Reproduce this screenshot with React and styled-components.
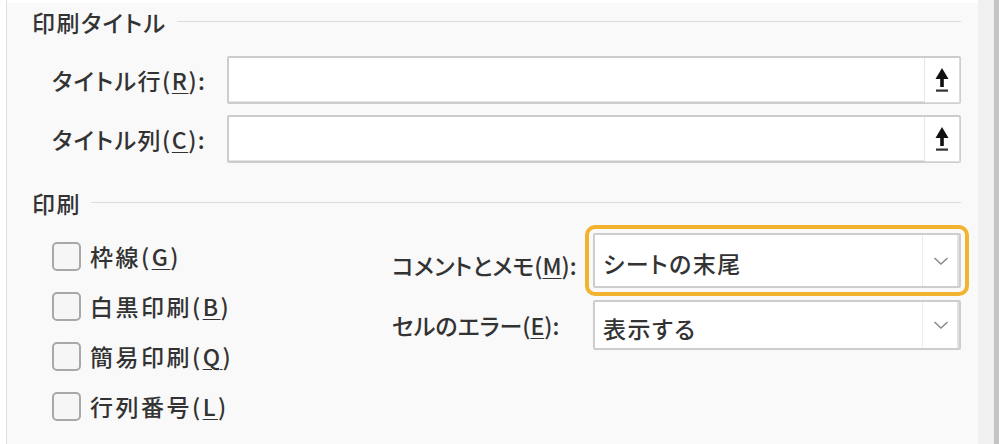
import React from "react";
import styled, { createGlobalStyle } from "styled-components";

const GlobalStyle = createGlobalStyle`
  html, body {
    margin: 0;
    padding: 0;
    background: #ffffff;
  }
  body {
    font-family: "Noto Sans CJK JP", "Noto Sans", sans-serif;
    color: #333333;
  }
`;

const Page = styled.div`
  display: flex;
  width: 1000px;
  height: 444px;
  overflow: hidden;
  background: #ffffff;
`;

const LeftEdge = styled.div`
  width: 6px;
  border-right: 1px solid #dedede;
  background: #ffffff;
`;

const Main = styled.div`
  flex: 1;
  display: flex;
  flex-direction: column;
  background: #f9f9f9;
  border-top: 3px solid #ffffff;
  padding: 4px 17px 0 25px;
  font-size: 23px;
  font-weight: 500;
  letter-spacing: 1.5px;
  font-feature-settings: "palt";
  white-space: nowrap;
`;

const RightRail = styled.div`
  width: 16px;
  background: #f0f0f0;
  border-right: 5px solid #c4c4c4;
  margin-right: 1px;
`;

const SectionHead = styled.div`
  display: flex;
  align-items: center;
  gap: 10px;
  height: 30px;
  margin-top: ${(p) => p.$top || 0}px;

  &::after {
    content: "";
    flex: 1;
    height: 1px;
    margin-top: -2px;
    background: #dcdcdc;
  }
`;

const Mnemonic = styled.u`
  text-decoration-thickness: 1px;
  text-underline-offset: 3px;
`;

const TitleRows = styled.div`
  display: flex;
  flex-direction: column;
  gap: 11px;
  margin-top: 19px;
  padding-left: 20px;
`;

const TitleRow = styled.div`
  display: grid;
  grid-template-columns: 175px 1fr;
  align-items: center;
`;

const RangeBox = styled.div`
  display: flex;
  justify-content: flex-end;
  height: 48px;
  box-sizing: border-box;
  background: #ffffff;
  border: 2px solid #cccccc;
  border-radius: 2px;
  box-shadow: inset 0 -1px 0 #e4e4e4;
`;

const PickButton = styled.div`
  width: 34px;
  display: flex;
  align-items: center;
  justify-content: center;
  background: #ffffff;
  border-left: 1px solid #e6e6e6;
  box-shadow: 1px 1px 1px #dcdcdc;
`;

const PrintArea = styled.div`
  display: grid;
  grid-template-columns: 340px 1fr;
  margin-top: 13px;
  padding-left: 20px;
`;

const CheckList = styled.div`
  display: flex;
  flex-direction: column;
`;

const CheckRow = styled.label`
  display: flex;
  align-items: center;
  gap: 9px;
  height: 50px;
  letter-spacing: 2.5px;
`;

const Box = styled.span`
  width: 29px;
  height: 29px;
  box-sizing: border-box;
  border: 2px solid #a8a8a8;
  border-radius: 5px;
  background: #f6f6f6;
`;

const Options = styled.div`
  display: grid;
  grid-template-columns: 201px 1fr;
  grid-auto-rows: min-content;
  row-gap: 12px;
  align-items: center;
  padding-top: 2px;
`;

const OptionLabel = styled.div`
  letter-spacing: 0;
  padding-top: ${(p) => (p.$first ? 8 : 0)}px;
`;

const Select = styled.div`
  display: flex;
  align-items: center;
  height: ${(p) => p.$h}px;
  box-sizing: border-box;
  background: #ffffff;
  border: 2px solid #cdcdcd;
  border-radius: 2px;
  padding-left: 8px;
  outline: ${(p) => (p.$focus ? "4px solid #f2b430" : "none")};
  outline-offset: 4px;
`;

const SelectText = styled.span`
  flex: 1;
  padding-top: 5px;
`;

const DropButton = styled.div`
  width: 36px;
  align-self: stretch;
  display: flex;
  align-items: center;
  justify-content: center;
  border-left: 1px solid #ececec;
  box-shadow: inset -2px 0 0 #e2e2e2;
`;

const UpArrow = () => (
  <svg width="16" height="27" viewBox="0 0 16 27">
    <polygon points="8,1 1.5,12 14.5,12" fill="#111" />
    <rect x="6.2" y="11" width="3.6" height="9" fill="#111" />
    <rect x="2" y="22.5" width="12" height="2.2" fill="#333" />
  </svg>
);

const Chevron = () => (
  <svg width="16" height="10" viewBox="0 0 16 10">
    <polyline points="1.5,2 8,8 14.5,2" fill="none" stroke="#8a8a8a" strokeWidth="1.5" />
  </svg>
);

const checks = [
  ["枠線(", "G", ")"],
  ["白黒印刷(", "B", ")"],
  ["簡易印刷(", "Q", ")"],
  ["行列番号(", "L", ")"],
];

export default function App() {
  return (
    <>
      <GlobalStyle />
      <Page>
        <LeftEdge />
        <Main>
          <SectionHead>印刷タイトル</SectionHead>
          <TitleRows>
            <TitleRow>
              <span>
                タイトル行(<Mnemonic>R</Mnemonic>):
              </span>
              <RangeBox>
                <PickButton>
                  <UpArrow />
                </PickButton>
              </RangeBox>
            </TitleRow>
            <TitleRow>
              <span>
                タイトル列(<Mnemonic>C</Mnemonic>):
              </span>
              <RangeBox>
                <PickButton>
                  <UpArrow />
                </PickButton>
              </RangeBox>
            </TitleRow>
          </TitleRows>

          <SectionHead $top={25}>印刷</SectionHead>
          <PrintArea>
            <CheckList>
              {checks.map(([a, m, b]) => (
                <CheckRow key={m}>
                  <Box />
                  <span>
                    {a}
                    <Mnemonic>{m}</Mnemonic>
                    {b}
                  </span>
                </CheckRow>
              ))}
            </CheckList>
            <Options>
              <OptionLabel $first>
                コメントとメモ(<Mnemonic>M</Mnemonic>):
              </OptionLabel>
              <Select $h={55} $focus>
                <SelectText>シートの末尾</SelectText>
                <DropButton>
                  <Chevron />
                </DropButton>
              </Select>
              <OptionLabel>
                セルのエラー(<Mnemonic>E</Mnemonic>):
              </OptionLabel>
              <Select $h={50}>
                <SelectText>表示する</SelectText>
                <DropButton>
                  <Chevron />
                </DropButton>
              </Select>
            </Options>
          </PrintArea>
        </Main>
        <RightRail />
      </Page>
    </>
  );
}
